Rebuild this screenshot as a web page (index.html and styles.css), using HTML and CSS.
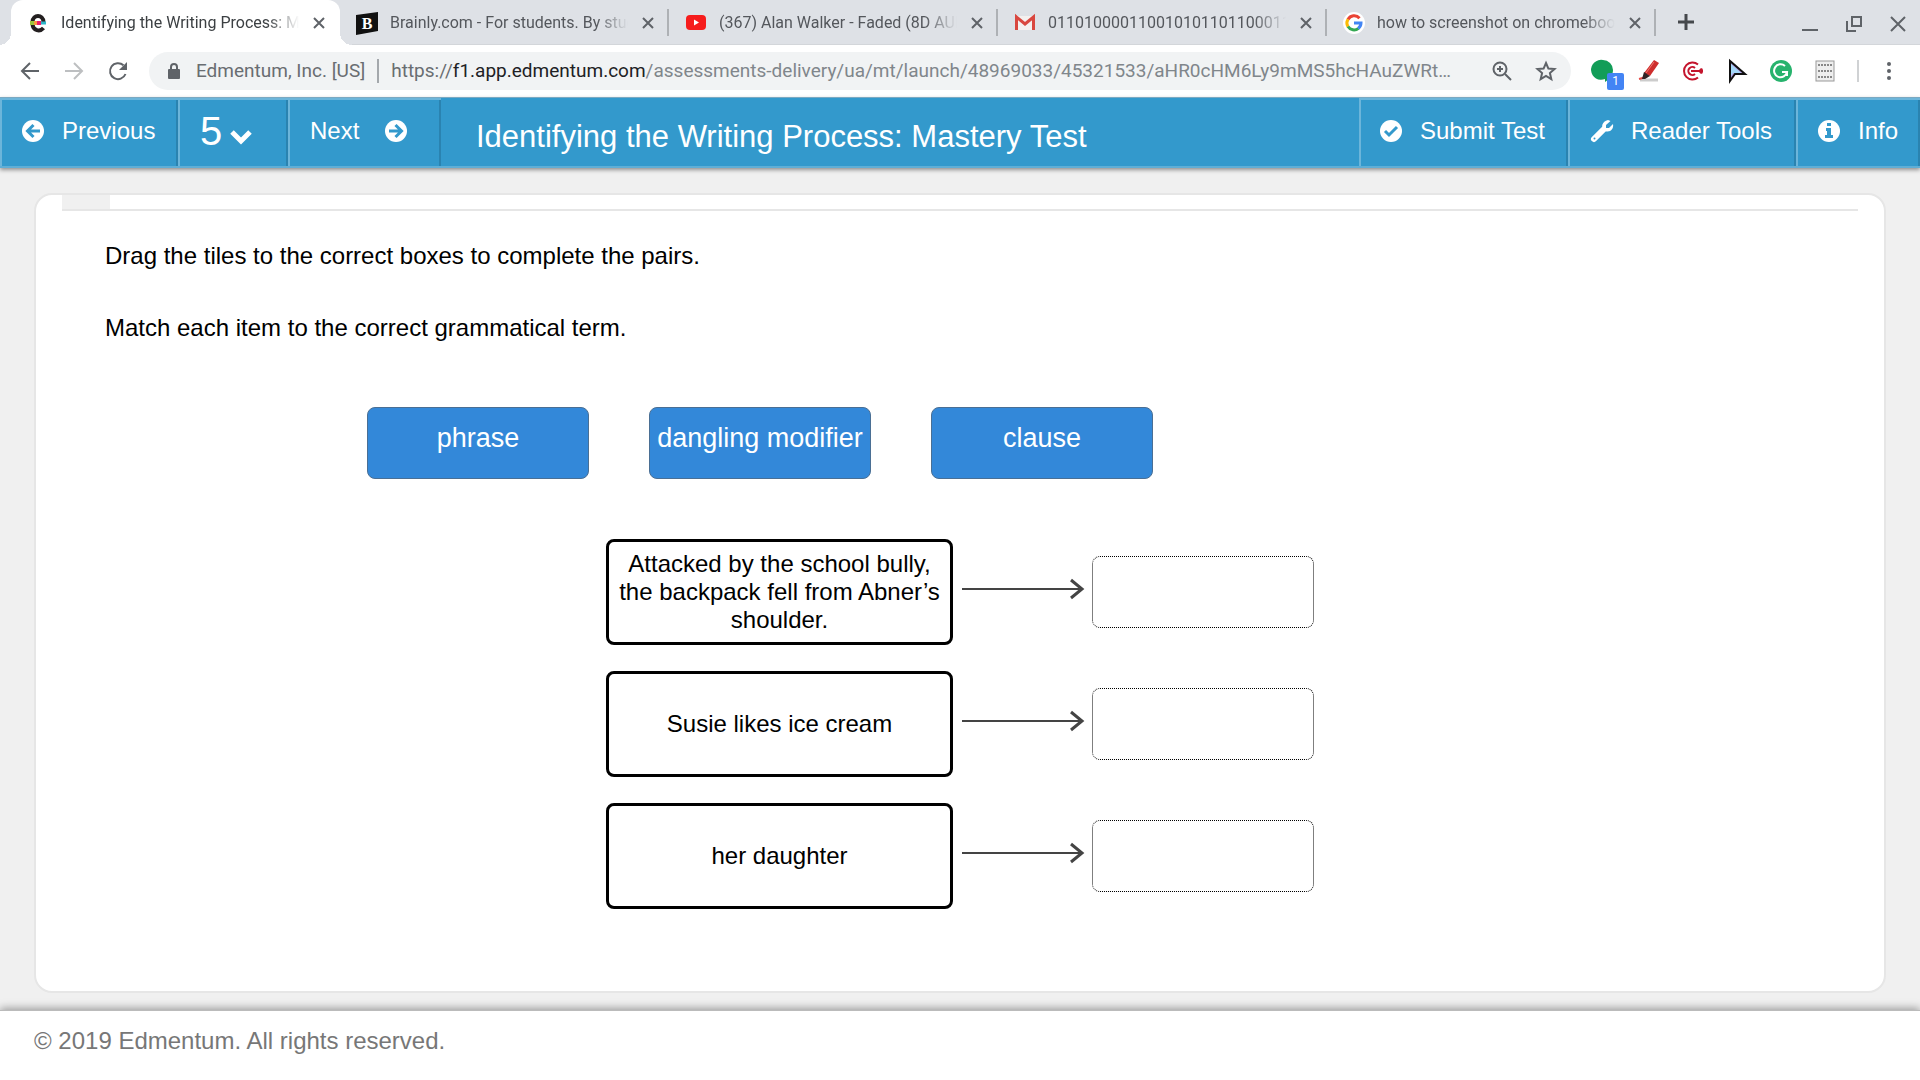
FILE: index.html
```html
<!DOCTYPE html>
<html lang="en">
<head>
<meta charset="utf-8">
<title>Identifying the Writing Process: Mastery Test</title>
<link rel="stylesheet" href="styles.css">
</head>
<body>
<div class="browser">
  <div class="tabstrip">
    <div class="tab tab-active">
      <svg class="favicon" viewBox="0 0 20 20"><path d="M4.500 9C5 1 15 1 15.500 9M4.500 11C5 18 12 19 15.500 15" fill="none" stroke="#231f20" stroke-width="4"/><path d="M2 10h5" stroke="#9bc53d" stroke-width="4"/><path d="M6 10h3" stroke="#f79a3e" stroke-width="4"/><path d="M9 10h4" stroke="#ec1c6b" stroke-width="4"/><path d="M13 10h5" stroke="#2fb4c8" stroke-width="3"/></svg>
      <span class="tab-title">Identifying the Writing Process: Mastery Test</span>
      <button class="tab-close" aria-label="Close tab"><svg viewBox="0 0 12 12"><path d="M1 1l10 10M11 1L1 11"/></svg></button>
    </div>
    <div class="tab">
      <svg class="favicon" viewBox="0 0 20 20"><path d="M-1 2L21-1V18L-1 22Z" fill="#111"/><text class="brand-letter" x="10" y="16" text-anchor="middle">B</text></svg>
      <span class="tab-title">Brainly.com - For students. By students.</span>
      <button class="tab-close" aria-label="Close tab"><svg viewBox="0 0 12 12"><path d="M1 1l10 10M11 1L1 11"/></svg></button>
    </div>
    <div class="tab">
      <svg class="favicon" viewBox="0 0 20 20"><rect y="2" width="20" height="15" rx="4" fill="#f61c1c"/><path d="M8 6.500l5 3-5 3z" fill="#fff"/></svg>
      <span class="tab-title">(367) Alan Walker - Faded (8D AUDIO)</span>
      <button class="tab-close" aria-label="Close tab"><svg viewBox="0 0 12 12"><path d="M1 1l10 10M11 1L1 11"/></svg></button>
    </div>
    <div class="tab">
      <svg class="favicon" viewBox="0 0 20 20"><rect x="1" y="3" width="18" height="14" fill="#f4f0ef"/><path d="M1.500 17V4L10 11l8.500-7v13" fill="none" stroke="#d9473f" stroke-width="3"/></svg>
      <span class="tab-title">0110100001100101011011000110110001101111</span>
      <button class="tab-close" aria-label="Close tab"><svg viewBox="0 0 12 12"><path d="M1 1l10 10M11 1L1 11"/></svg></button>
    </div>
    <div class="tab">
      <svg class="favicon" viewBox="0 0 20 20"><circle cx="10" cy="10" r="11" fill="#fff"/><g fill="none" stroke-width="3"><path d="M15.500 5.200A7 7 0 0 0 4 6.500" stroke="#ea4335"/><path d="M4 6.300A7 7 0 0 0 4 13.700" stroke="#fbbc05"/><path d="M4 13.500A7 7 0 0 0 14.500 15.300" stroke="#34a853"/><path d="M14.200 15.500A7 7 0 0 0 17 10H10" stroke="#4285f4"/></g></svg>
      <span class="tab-title">how to screenshot on chromebook</span>
      <button class="tab-close" aria-label="Close tab"><svg viewBox="0 0 12 12"><path d="M1 1l10 10M11 1L1 11"/></svg></button>
    </div>
    <button class="new-tab" aria-label="New tab"><svg viewBox="0 0 16 16"><path d="M8 0v16M0 8h16"/></svg></button>
    <div class="window-controls">
      <button aria-label="Minimize"><svg viewBox="0 0 16 16"><path d="M0 14h16"/></svg></button>
      <button aria-label="Restore"><svg viewBox="0 0 16 16"><path d="M6 1h9v9H6zM1 5v10h9"/></svg></button>
      <button aria-label="Close window"><svg viewBox="0 0 16 16"><path d="M1 1l14 14M15 1L1 15"/></svg></button>
    </div>
  </div>
  <div class="toolbar">
    <div class="nav-buttons">
      <button aria-label="Back"><svg viewBox="0 0 20 20"><path d="M19 10H2M10 2L2 10l8 8"/></svg></button>
      <button class="dim" aria-label="Forward" disabled><svg viewBox="0 0 20 20"><path d="M1 10h17M10 2l8 8-8 8"/></svg></button>
      <button aria-label="Reload"><svg viewBox="0 0 20 20"><path d="M17.500 13A8 8 0 1 1 15.500 4.300"/><path d="M19 1v8h-8z" class="solid"/></svg></button>
    </div>
    <div class="omnibox">
      <svg class="lock" viewBox="0 0 12 16"><rect y="6" width="12" height="10" rx="1"/><path d="M3 7V4a3 3 0 0 1 6 0v3" fill="none" stroke="#5f6368" stroke-width="2"/></svg>
      <span class="site-owner">Edmentum, Inc. [US]</span>
      <div class="url" role="textbox" aria-label="Address" tabindex="0"><span class="scheme">https://</span><span class="host">f1.app.edmentum.com</span>/assessments-delivery/ua/mt/launch/48969033/45321533/aHR0cHM6Ly9mMS5hcHAuZWRt…</div>
      <button class="omni-action" aria-label="Zoom"><svg viewBox="0 0 20 20"><circle cx="8" cy="8" r="6.500"/><path d="M8 5v6M5 8h6M13 13l6 6"/></svg></button>
      <button class="omni-action" aria-label="Bookmark this page"><svg viewBox="0 0 20 20"><path d="M10 2l2.400 5.600 6.100.5-4.600 4 1.400 6L10 14.900 4.700 18.100l1.400-6-4.600-4 6.100-.5z"/></svg></button>
    </div>
    <div class="extensions">
      <button class="ext" aria-label="Hangouts"><svg viewBox="0 0 24 24"><path d="M10 1a10 10 0 0 1 10 10c0 5-3 9-8 12v-3A10 10 0 1 1 10 1z" fill="#129d58"/></svg><span class="badge">1</span></button>
      <button class="ext" aria-label="Highlighter"><svg viewBox="0 0 24 24"><path d="M3 21h18" stroke="#ccc" stroke-width="3"/><path d="M2 20l7-2" stroke="#e54b47" stroke-width="2"/><path d="M17 1l5 3-9 13-6-3z" fill="#ce2e2d"/><path d="M7 13l6 4-5 3-3 0z" fill="#302324"/><path d="M17 3l-8 11" stroke="#ef7770" stroke-width="1"/></svg></button>
      <button class="ext" aria-label="Target"><svg viewBox="0 0 24 24"><g fill="none" stroke="#c4152d"><path d="M17 5.500A8.500 8.500 0 1 0 17 18.500" stroke-width="2"/><path d="M14 9a4 4 0 1 0 0 6" stroke-width="2"/><path d="M10 12h12" stroke-width="2"/></g><path d="M17 12l3-3 2 1-1 2 1 2-2 1z" fill="#c4152d"/></svg></button>
      <button class="ext" aria-label="Cursor"><svg viewBox="0 0 24 24"><path d="M5 2v20l5-7 10 0z" fill="#b49be0" stroke="#111" stroke-width="2"/><path d="M6 5l10 9H8l-2 3z" fill="#a3d7f8"/></svg></button>
      <button class="ext" aria-label="Grammarly"><svg viewBox="0 0 24 24"><circle cx="12" cy="12" r="11" fill="#27b36d"/><path d="M16 7A6.500 6.500 0 1 0 18 13h-5M18 13v4" fill="none" stroke="#fff" stroke-width="2"/></svg></button>
      <button class="ext" aria-label="Binary"><svg viewBox="0 0 24 24"><rect x="3" y="2" width="18" height="20" fill="#eee" stroke="#999"/><path d="M5 6h14M5 12h14M5 18h14" stroke="#888" stroke-width="2" stroke-dasharray="2 1"/></svg></button>
      <span class="divider"></span>
      <button class="ext menu" aria-label="Menu"><svg viewBox="0 0 24 24" fill="#5f6368"><circle cx="12" cy="5" r="2"/><circle cx="12" cy="12" r="2"/><circle cx="12" cy="19" r="2"/></svg></button>
    </div>
  </div>
</div>

<header class="appbar">
  <button class="cell cell-prev"><svg viewBox="0 0 22 22"><circle cx="11" cy="11" r="11" fill="#fff"/><path d="M18 11H6M11.500 5L5.500 11l6 6"/></svg>Previous</button>
  <button class="cell cell-number" aria-haspopup="listbox">5<svg viewBox="0 0 22 22"><path d="M2 6l9 9 9-9" class="chevron"/></svg></button>
  <button class="cell cell-next">Next<svg viewBox="0 0 22 22"><circle cx="11" cy="11" r="11" fill="#fff"/><path d="M4 11h12M10.500 5l6 6-6 6"/></svg></button>
  <h1 class="title">Identifying the Writing Process: Mastery Test</h1>
  <button class="cell cell-submit"><svg viewBox="0 0 22 22"><circle cx="11" cy="11" r="11" fill="#fff"/><path d="M5 11l4 4 8-8"/></svg>Submit Test</button>
  <button class="cell cell-tools"><svg viewBox="0 0 22 22"><path d="M3 19L12 10" stroke="#fff" class="handle"/><path d="M19.500 1L15 5v3h3l4-4c1 5-3 9-8 7-5-3-3-10 3-11z" fill="#fff"/><circle cx="3.500" cy="18.500" r="1" fill="#39c"/></svg>Reader Tools</button>
  <button class="cell cell-info"><svg viewBox="0 0 22 22"><circle cx="11" cy="11" r="11" fill="#fff"/><path d="M9 3h4v3H9zM8 8h5v7h2v3H7v-3h2v-4H8z" class="info-mark"/></svg>Info</button>
</header>

<main class="page">
  <section class="card">
    <div class="card-top"><div class="stub"></div></div>
    <div class="instructions">
      <p>Drag the tiles to the correct boxes to complete the pairs.</p>
      <p>Match each item to the correct grammatical term.</p>
    </div>
    <div class="activity">
      <div class="tiles">
        <button class="tile" draggable="true">phrase</button>
        <button class="tile" draggable="true">dangling modifier</button>
        <button class="tile" draggable="true">clause</button>
      </div>
      <div class="pairs">
        <div class="pair">
          <div class="item">Attacked by the school bully, the backpack fell from Abner’s shoulder.</div>
          <svg class="arrow" viewBox="0 0 122 22"><path d="M0 11h120"/><path d="M109 2l11 9-11 9" class="head"/></svg>
          <div class="slot"></div>
        </div>
        <div class="pair">
          <div class="item">Susie likes ice cream</div>
          <svg class="arrow" viewBox="0 0 122 22"><path d="M0 11h120"/><path d="M109 2l11 9-11 9" class="head"/></svg>
          <div class="slot"></div>
        </div>
        <div class="pair">
          <div class="item">her daughter</div>
          <svg class="arrow" viewBox="0 0 122 22"><path d="M0 11h120"/><path d="M109 2l11 9-11 9" class="head"/></svg>
          <div class="slot"></div>
        </div>
      </div>
    </div>
  </section>
</main>

<footer class="footer">© 2019 Edmentum. All rights reserved.</footer>
</body>
</html>
```
FILE: styles.css
```css
* { box-sizing: border-box; }

body {
  margin: 0;
  min-height: 100vh;
  display: flex;
  flex-direction: column;
  background: #f0f0f0;
  color: #000;
  font: 24px/28px "Liberation Sans", Arial, sans-serif;
}

button {
  margin: 0;
  padding: 0;
  border: 0;
  background: none;
  color: inherit;
  font: inherit;
}

svg { display: block; flex: none; overflow: visible; }

/* Browser chrome */
.browser { font-family: Roboto, sans-serif; background: #fff; }

.tabstrip {
  display: flex;
  height: 45px;
  padding-left: 11px;
  background: #dee1e6;
  border-bottom: 1px solid #d3d6da;
}

.tab {
  display: flex;
  align-items: center;
  flex: 0 1 329px;
  min-width: 0;
  height: 45px;
  padding: 0 15px 0 17px;
  position: relative;
  font-size: 16px;
  line-height: 20px;
  color: #54575c;
}

.tab:not(.tab-active)::after {
  content: "";
  position: absolute;
  right: 0;
  top: 9px;
  width: 2px;
  height: 27px;
  background: #aeb1b5;
}

.tab-active {
  background: #fff;
  border-radius: 12px 12px 0 0;
  color: #3c4043;
}

.tab-active::before,
.tab-active::after {
  content: "";
  position: absolute;
  bottom: 0;
  width: 12px;
  height: 12px;
}

.tab-active::before { left: -12px; background: radial-gradient(circle at 0 0, #dee1e6 12px, #fff 12px); }
.tab-active::after { right: -12px; background: radial-gradient(circle at 100% 0, #dee1e6 12px, #fff 12px); }

.favicon { width: 20px; height: 20px; margin-right: 13px; }

.brand-letter { font: bold 16px "Liberation Serif", serif; fill: #fff; }

.tab-title {
  flex: 1;
  min-width: 0;
  overflow: hidden;
  white-space: nowrap;
  -webkit-mask-image: linear-gradient(to left, transparent, #000 32px);
  mask-image: linear-gradient(to left, transparent, #000 32px);
}

.tab-close { margin-left: 14px; }
.tab-close svg { width: 12px; height: 12px; stroke: #5f6368; stroke-width: 2; }

.new-tab { margin-left: 22px; }
.new-tab svg { width: 16px; height: 16px; stroke: #45484c; stroke-width: 3; }

.window-controls { display: flex; align-items: center; gap: 28px; margin-left: auto; padding: 3px 14px 0 0; }
.window-controls svg { width: 16px; height: 16px; fill: none; stroke: #5f6368; stroke-width: 2; }

.toolbar { display: flex; align-items: center; height: 52px; padding: 0 20px; }

.nav-buttons { display: flex; gap: 24px; margin-right: 21px; }
.nav-buttons svg { width: 20px; height: 20px; fill: none; stroke: #5f6368; stroke-width: 2; }
.nav-buttons .dim svg { stroke: #bdbfc1; }
.nav-buttons .solid { fill: #5f6368; stroke: none; }

.omnibox {
  display: flex;
  align-items: center;
  flex: 1;
  min-width: 0;
  height: 38px;
  padding: 0 15px 0 19px;
  border-radius: 19px;
  background: #f1f3f4;
  color: #80868b;
  font-size: 19px;
  line-height: 24px;
}

.lock { width: 12px; height: 16px; margin-right: 16px; fill: #5f6368; }
.site-owner { padding-right: 12px; border-right: 2px solid #a4a8ac; color: #696d71; white-space: nowrap; }
.url { flex: 1; min-width: 0; margin-left: 12px; overflow: hidden; white-space: nowrap; }
.scheme { color: #696d71; }
.host { color: #202124; }

.omni-action { margin-left: 24px; }
.omni-action svg { width: 20px; height: 20px; fill: none; stroke: #5f6368; stroke-width: 2; }

.extensions { display: flex; align-items: center; gap: 20px; margin-left: 22px; }
.ext { position: relative; }
.ext svg { width: 24px; height: 24px; }

.badge {
  position: absolute;
  left: 14px;
  top: 14px;
  width: 17px;
  height: 17px;
  border-radius: 2px;
  background: #4384f4;
  color: #fff;
  font-size: 12px;
  line-height: 17px;
}

.divider { width: 2px; height: 22px; background: #d0d2d4; }
.menu { margin: 0 -1px 0 -2px; }

/* Application bar */
.appbar {
  display: flex;
  position: relative;
  height: 71px;
  background: #39c;
  border-top: 1px solid #7aa9c2;
  border-bottom: 2px solid #5faed6;
  box-shadow: 0 2px 4px rgba(0, 0, 0, .4);
  color: #fff;
}

.cell {
  display: flex;
  align-items: center;
  flex: none;
  padding-bottom: 4px;
  border: solid #6cb5da;
  border-width: 2px 0 0 2px;
  box-shadow: inset -2px 0 #2a83b0;
  white-space: nowrap;
}

.cell svg { width: 22px; height: 22px; fill: none; stroke: #39c; stroke-width: 3; }
.cell circle, .cell .info-mark { stroke: none; }
.cell .info-mark { fill: #39c; }
.cell .chevron { stroke: #fff; stroke-width: 5; }
.cell .handle { stroke-width: 6; stroke-linecap: round; }
.cell-tools path:not(.handle) { stroke: none; }

.cell-prev { width: 178px; padding-left: 20px; gap: 18px; }
.cell-number { width: 110px; padding-left: 20px; gap: 8px; font-size: 40px; line-height: 48px; }
.cell-number svg { margin-top: 12px; }
.cell-next { width: 153px; padding-left: 20px; gap: 26px; }
.cell-submit { width: 209px; padding-left: 19px; gap: 18px; }
.cell-tools { width: 228px; padding-left: 21px; gap: 18px; }
.cell-info { width: 124px; padding-left: 20px; gap: 18px; }

.title {
  flex: 1;
  margin: 0;
  padding: 21px 0 0 35px;
  font-weight: 400;
  font-size: 31px;
  line-height: 36px;
  white-space: nowrap;
}

/* Question */
.page { flex: 1; display: flex; padding: 25px 34px 17px; }

.card {
  flex: 1;
  border: 2px solid #e6e6e6;
  border-radius: 18px;
  background: #fff;
}

.card-top { margin: 0 26px; border-bottom: 2px solid #e6e6e6; }
.stub { width: 48px; height: 14px; background: #f0f0f0; }

.instructions { padding: 31px 69px 0; }
.instructions p { margin: 0 0 44px; }

.activity { width: 1186px; max-width: 100%; margin: 65px auto 0; }
.instructions p:last-child { margin-bottom: 0; }

.tiles { display: flex; gap: 60px; }

.tile {
  width: 222px;
  height: 72px;
  padding-bottom: 10px;
  border: 1px solid #4a6f94;
  border-radius: 8px;
  background: #3388d9;
  color: #fff;
  font-size: 27px;
  line-height: 32px;
  white-space: nowrap;
}

.pairs { display: flex; flex-direction: column; align-items: center; gap: 26px; margin: 60px 0 62px; }

.pair { display: flex; align-items: center; }

.item {
  display: flex;
  align-items: center;
  justify-content: center;
  width: 347px;
  min-height: 106px;
  padding: 4px 6px;
  border: 3px solid #000;
  border-radius: 8px;
  text-align: center;
}

.arrow { width: 122px; height: 22px; margin: 0 8px 6px 9px; fill: none; stroke: #444; stroke-width: 2; }
.arrow .head { stroke-width: 3; }

.slot {
  width: 222px;
  height: 72px;
  border: 1px dotted #000;
  border-radius: 8px;
}

.footer {
  position: relative;
  height: 70px;
  padding: 16px 34px;
  border-top: 1px solid #bbb;
  background: #fff;
  box-shadow: 0 -2px 8px rgba(0, 0, 0, .35);
  color: #777;
}
```
